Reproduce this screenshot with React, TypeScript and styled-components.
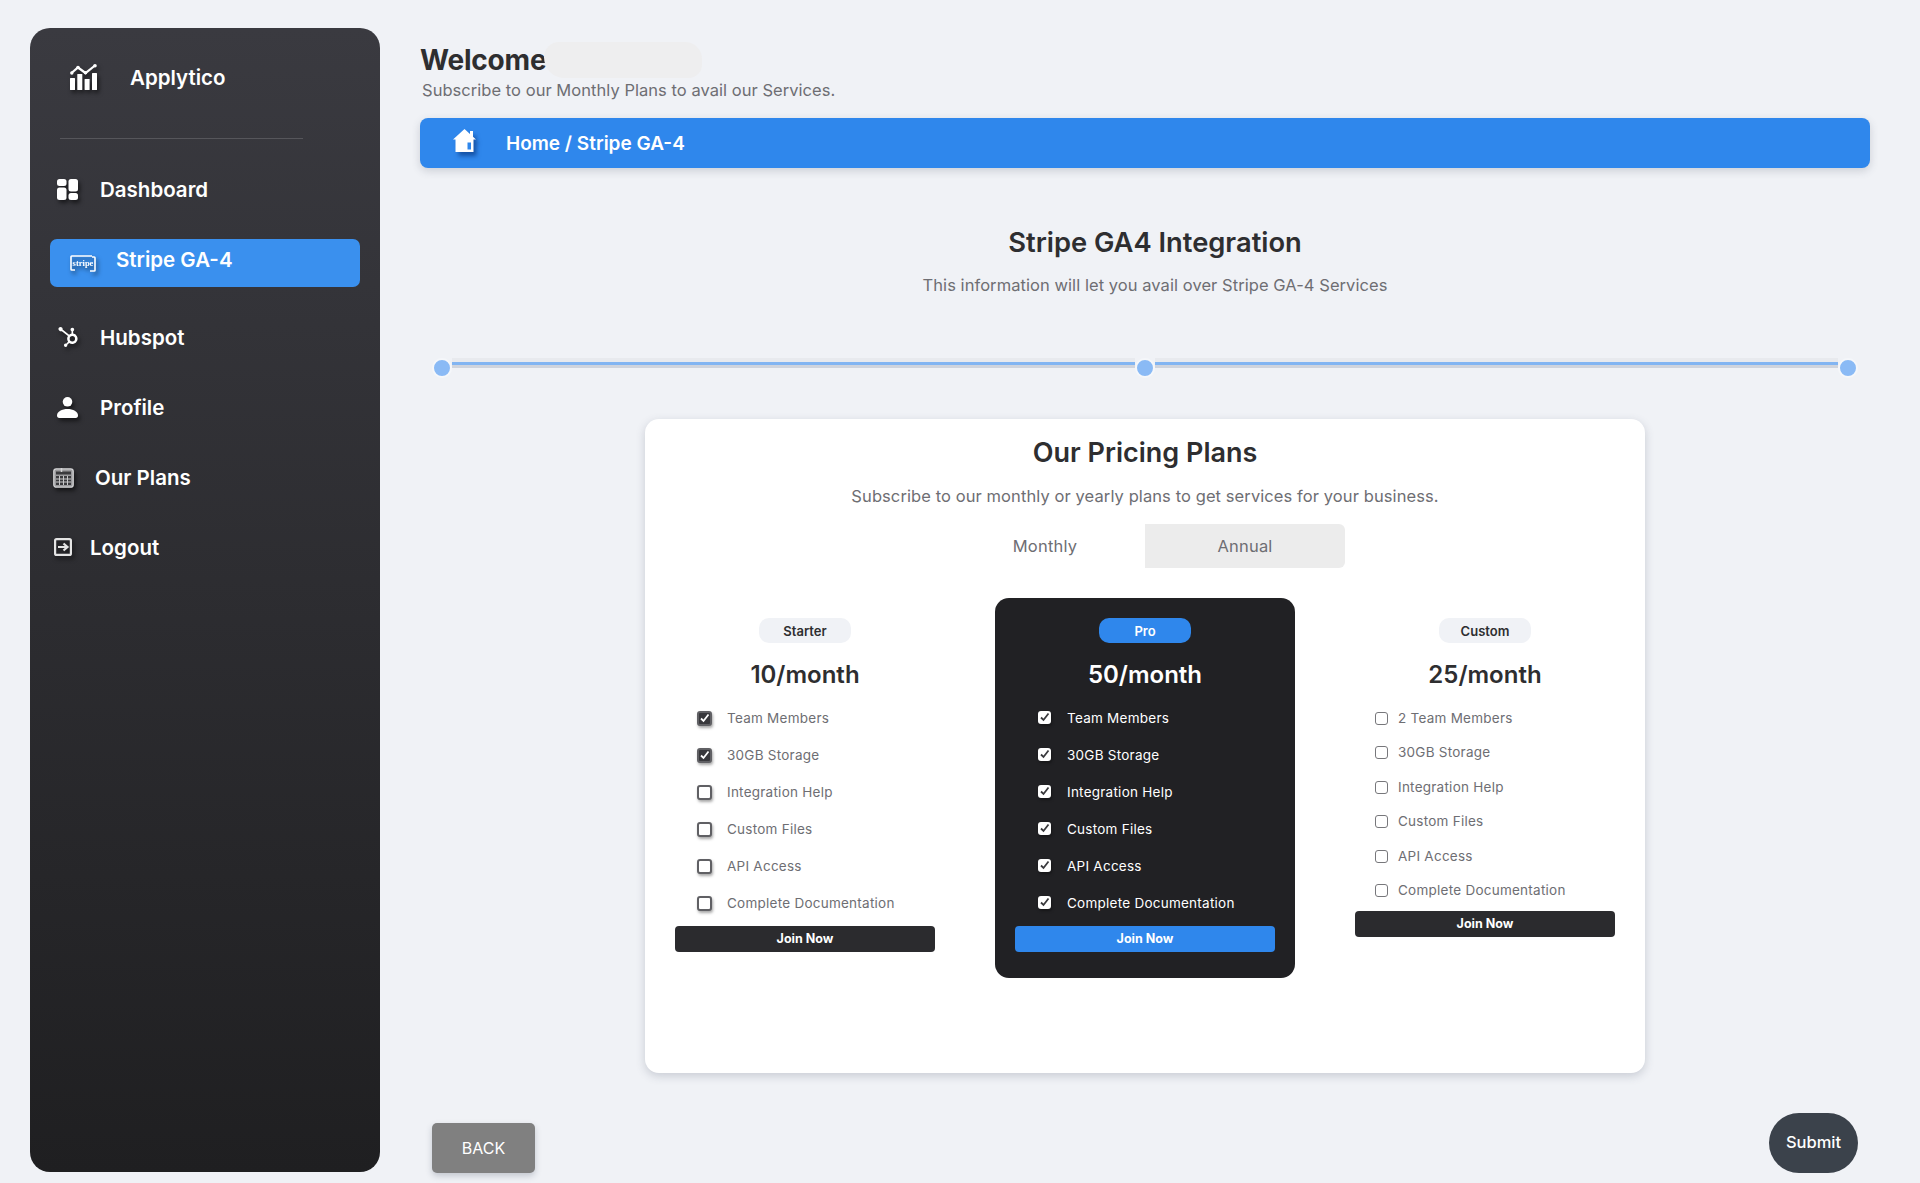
import styled, { createGlobalStyle } from 'styled-components';
import { SiHubspot } from 'react-icons/si';

const GlobalStyle = createGlobalStyle`
  html, body {
    margin: 0;
    padding: 0;
    background: #f0f2f6;
    font-family: 'Inter', 'Liberation Sans', sans-serif;
  }
  * {
    box-sizing: border-box;
  }
`;

type PlanTone = 'light' | 'dark';

type Plan = {
  name: string;
  price: string;
  tone: PlanTone;
  rowHeight: number;
  thin?: boolean;
  rowInset: number;
  rowGap: number;
  features: { label: string; checked: boolean }[];
};

const featureNames = ['Team Members', '30GB Storage', 'Integration Help', 'Custom Files', 'API Access', 'Complete Documentation'];

const plans: Plan[] = [
  {
    name: 'Starter',
    price: '10/month',
    tone: 'light',
    rowHeight: 37,
    rowInset: 22,
    rowGap: 15,
    features: featureNames.map((label, i) => ({ label, checked: i < 2 })),
  },
  {
    name: 'Pro',
    price: '50/month',
    tone: 'dark',
    rowHeight: 37,
    rowInset: 23,
    rowGap: 16,
    features: featureNames.map((label) => ({ label, checked: true })),
  },
  {
    name: 'Custom',
    price: '25/month',
    tone: 'light',
    rowHeight: 34.5,
    thin: true,
    rowInset: 20,
    rowGap: 10,
    features: featureNames.map((label, i) => ({ label: i === 0 ? `2 ${label}` : label, checked: false })),
  },
];

const BrandIcon = () => (
  <svg width="27" height="26" viewBox="0 0 27 26" fill="#fff">
    <rect x="0" y="14" width="5" height="12" rx="0.5" />
    <rect x="7.3" y="10" width="5" height="16" rx="0.5" />
    <rect x="14.6" y="15" width="5" height="11" rx="0.5" />
    <rect x="22" y="9" width="5" height="17" rx="0.5" />
    <polyline points="1.5,9 8,3.500 15.500,9 25,1.500" fill="none" stroke="#fff" strokeWidth="2.200" />
    <circle cx="1.800" cy="9" r="1.700" />
    <circle cx="8" cy="3.500" r="1.800" />
    <circle cx="15.500" cy="8.800" r="1.700" />
    <circle cx="25" cy="1.800" r="1.800" />
  </svg>
);

const DashboardIcon = () => (
  <svg width="21" height="21" viewBox="0 0 21 21" fill="#fff">
    <rect x="0" y="0" width="9.500" height="7" rx="2.500" />
    <rect x="0" y="8.500" width="9.500" height="12.500" rx="2.500" />
    <rect x="11.500" y="0" width="9.500" height="12.500" rx="2.500" />
    <rect x="11.500" y="14" width="9.500" height="7" rx="2.500" />
  </svg>
);

const StripeIcon = () => (
  <svg width="26" height="17" viewBox="0 0 26 17" fill="none">
    <path d="M4 1H1.800a.8.8 0 0 0-.8.8v12.400c0 .5.3.8.8.8H5M20 16h4.200c.5 0 .8-.3.8-.8V2.800c0-.5-.3-.8-.8-.8H22M4 1h18" stroke="#fff" strokeWidth="1.600" />
    <text x="13" y="11" textAnchor="middle" fontSize="8.500" fontWeight="700" fill="#fff" fontFamily="Liberation Serif, serif">stripe</text>
  </svg>
);

const ProfileIcon = () => (
  <svg width="21" height="21" viewBox="0 0 21 21" fill="#fff">
    <circle cx="10.500" cy="4.800" r="4.800" />
    <path d="M0 18.500C0 14.500 5 12 10.500 12S21 14.500 21 18.500c0 1.500-.8 2.500-2.300 2.500H2.300C.8 21 0 20 0 18.500z" />
  </svg>
);

const PlansIcon = () => (
  <svg width="21" height="21" viewBox="0 0 21 21" fill="none">
    <rect x="0.800" y="1.800" width="19.400" height="18.400" rx="2.500" fill="#9a9a9d" stroke="#d4d4d6" strokeWidth="1.300" />
    <rect x="3" y="4.500" width="15" height="3" fill="#3a3a3d" />
    <rect x="3" y="9" width="15" height="9" fill="#3a3a3d" />
    <path d="M6.500 9v9M10.500 9v9M14.500 9v9M3 12h15M3 15h15" stroke="#c8c8ca" strokeWidth="1" />
    <path d="M8.500 1v4" stroke="#d4d4d6" strokeWidth="1.500" />
  </svg>
);

const LogoutIcon = () => (
  <svg width="18" height="18" viewBox="0 0 18 18" fill="none">
    <rect x="1.100" y="1.100" width="15.800" height="15.800" rx="1.500" stroke="#e4e4e4" strokeWidth="2.200" />
    <path d="M4 9h9.500M9.500 5.500 13.500 9l-4 3.500" stroke="#e4e4e4" strokeWidth="2.200" />
  </svg>
);

const HomeIcon = () => (
  <svg width="23" height="28" viewBox="0 0 23 28">
    <path d="M11.500 3 0 13.500h2.500V26h18V13.500H23l-3-2.800V5h-3v3z" fill="#fff" />
    <rect x="14.500" y="16.500" width="3.500" height="7" fill="#2f87ec" />
  </svg>
);

const CheckMark = ({ color }: { color: string }) => (
  <svg width="11" height="11" viewBox="0 0 11 11" fill="none">
    <polyline points="2,5.500 4.500,8 9.500,1.500" stroke={color} strokeWidth="1.800" />
  </svg>
);

const App = () => {
  return (
    <Page>
      <GlobalStyle />
      <Sidebar>
        <Brand>
          <IconSlot>
            <BrandIcon />
          </IconSlot>
          <BrandName>Applytico</BrandName>
        </Brand>
        <SideDivider />
        <NavList>
          <NavItem $pad={7} $gap={22}>
            <IconSlot>
              <DashboardIcon />
            </IconSlot>
            Dashboard
          </NavItem>
          <ActiveNavItem>
            <IconSlot>
              <StripeIcon />
            </IconSlot>
            <ActiveLabel>Stripe GA-4</ActiveLabel>
          </ActiveNavItem>
          <NavItem $pad={8} $gap={22}>
            <IconSlot>
              <SiHubspot size={20} color="#fff" />
            </IconSlot>
            Hubspot
          </NavItem>
          <NavItem $pad={7} $gap={22}>
            <IconSlot>
              <ProfileIcon />
            </IconSlot>
            Profile
          </NavItem>
          <NavItem $pad={3} $gap={21}>
            <IconSlot>
              <PlansIcon />
            </IconSlot>
            Our Plans
          </NavItem>
          <NavItem $pad={4} $gap={18}>
            <IconSlot>
              <LogoutIcon />
            </IconSlot>
            Logout
          </NavItem>
        </NavList>
      </Sidebar>

      <Main>
        <Welcome>
          Welcome
          <Smudge />
        </Welcome>
        <Lead>Subscribe to our Monthly Plans to avail our Services.</Lead>
        <Breadcrumb>
          <HomeSlot>
            <HomeIcon />
          </HomeSlot>
          Home / Stripe GA-4
        </Breadcrumb>

        <PageTitle>Stripe GA4 Integration</PageTitle>
        <PageNote>This information will let you avail over Stripe GA-4 Services</PageNote>

        <Stepper>
          <StepDot />
          <StepLine />
          <StepDot />
          <StepLine />
          <StepDot />
        </Stepper>

        <PricingCard>
          <PricingTitle>Our Pricing Plans</PricingTitle>
          <PricingNote>Subscribe to our monthly or yearly plans to get services for your business.</PricingNote>
          <BillingToggle>
            <BillingOption>Monthly</BillingOption>
            <BillingOption $selected>Annual</BillingOption>
          </BillingToggle>

          <PlanGrid>
            {plans.map((plan) => (
              <PlanColumn key={plan.name} $tone={plan.tone}>
                <PlanPill $tone={plan.tone}>{plan.name}</PlanPill>
                <PlanPrice $tone={plan.tone}>{plan.price}</PlanPrice>
                <FeatureList $thin={plan.thin}>
                  {plan.features.map((feature) => (
                    <FeatureRow key={feature.label} $height={plan.rowHeight} $inset={plan.rowInset} $gap={plan.rowGap}>
                      <CheckBox $tone={plan.tone} $checked={feature.checked} $thin={plan.thin}>
                        {feature.checked && <CheckMark color={plan.tone === 'dark' ? '#3a3a3d' : '#fff'} />}
                      </CheckBox>
                      <FeatureLabel $tone={plan.tone}>{feature.label}</FeatureLabel>
                    </FeatureRow>
                  ))}
                </FeatureList>
                <JoinButton $tone={plan.tone} $thin={plan.thin}>Join Now</JoinButton>
              </PlanColumn>
            ))}
          </PlanGrid>
        </PricingCard>

        <Footer>
          <BackButton>BACK</BackButton>
          <SubmitButton>Submit</SubmitButton>
        </Footer>
      </Main>
    </Page>
  );
};

const Page = styled.div`
  width: 1920px;
  height: 1183px;
  overflow: hidden;
  padding: 28px 50px 0 30px;
  display: grid;
  grid-template-columns: 350px 1450px;
  column-gap: 40px;
  align-items: start;
  background: #f0f2f6;
`;

const Sidebar = styled.aside`
  height: 1144px;
  border-radius: 20px;
  padding-top: 24px;
  background: linear-gradient(180deg, #3a3a40 0%, #1f1f21 100%);
  color: #fff;
`;

const IconSlot = styled.span`
  display: inline-flex;
  flex: none;
  filter: drop-shadow(2px 3px 2px rgba(0, 0, 0, 0.55));
`;

const Brand = styled.div`
  height: 50px;
  padding-left: 40px;
  display: flex;
  align-items: center;
  gap: 33px;
`;

const BrandName = styled.span`
  margin-top: 1px;
  font-size: 20.500px;
  font-weight: 600;
`;

const SideDivider = styled.div`
  width: 243px;
  height: 1px;
  margin: 36px 0 0 30px;
  background: #56565b;
`;

const NavList = styled.nav`
  margin: 27px 20px 0;
  display: flex;
  flex-direction: column;
  gap: 24px;
`;

const NavItem = styled.a<{ $pad: number; $gap: number }>`
  height: 46px;
  padding-left: ${(p) => p.$pad}px;
  display: flex;
  align-items: center;
  gap: ${(p) => p.$gap}px;
  font-size: 20.500px;
  font-weight: 600;
  color: #fff;
`;

const ActiveNavItem = styled.a`
  height: 48px;
  margin: 3px 0;
  padding-left: 20px;
  display: flex;
  align-items: center;
  gap: 20px;
  border-radius: 7px;
  background: #3a90ee;
  font-size: 20.500px;
  font-weight: 600;
  color: #fff;
`;

const ActiveLabel = styled.span`
  margin-bottom: 8px;
`;

const Main = styled.main`
  padding-top: 15px;
  display: flex;
  flex-direction: column;
`;

const Welcome = styled.h1`
  position: relative;
  margin: 0;
  font-size: 28px;
  line-height: 34px;
  font-weight: 700;
  letter-spacing: -0.2px;
  color: #2e2e30;
`;

const Smudge = styled.span`
  position: absolute;
  left: 124px;
  top: -1px;
  width: 158px;
  height: 36px;
  border-radius: 16px 18px 14px 22px;
  background: #eeeeef;
`;

const Lead = styled.p`
  margin: 2px 0 0 2px;
  font-size: 16.500px;
  line-height: 22px;
  letter-spacing: 0.04px;
  color: #6e6e73;
`;

const Breadcrumb = styled.div`
  height: 50px;
  margin-top: 17px;
  padding-left: 33px;
  display: flex;
  align-items: center;
  gap: 30px;
  border-radius: 8px;
  background: #2f87ec;
  box-shadow: 0 3px 8px rgba(60, 70, 90, 0.2);
  color: #fff;
  font-size: 19px;
  font-weight: 600;
`;

const HomeSlot = styled.span`
  display: inline-flex;
  margin-top: -6px;
  filter: drop-shadow(3px 4px 2px rgba(0, 40, 110, 0.55));
`;

const PageTitle = styled.h2`
  margin: 57px 0 0;
  padding-left: 20px;
  text-align: center;
  font-size: 27.300px;
  line-height: 36px;
  font-weight: 600;
  color: #2e2e30;
`;

const PageNote = styled.p`
  margin: 12px 0 0;
  padding-left: 20px;
  text-align: center;
  font-size: 16.500px;
  line-height: 24px;
  letter-spacing: 0.06px;
  color: #6e6e73;
`;

const Stepper = styled.div`
  margin: 61px 12px 0 12px;
  display: flex;
  align-items: flex-start;
`;

const StepDot = styled.span`
  flex: none;
  width: 20px;
  height: 20px;
  border-radius: 50%;
  border: 2px solid #f5f7fa;
  background: #8abaf5;
`;

const StepLine = styled.span`
  flex: 1;
  height: 10px;
  background: linear-gradient(180deg, #e8eaee 0 4px, #82b5f2 4px 7px, #cfd4dd 7px 10px);
`;

const PricingCard = styled.section`
  width: 1000px;
  height: 654px;
  margin: 41px 0 0 225px;
  padding: 16px 30px 0;
  border-radius: 14px;
  background: #fff;
  box-shadow: 0 3px 10px rgba(60, 70, 90, 0.22);
`;

const PricingTitle = styled.h2`
  margin: 0;
  text-align: center;
  font-size: 27px;
  line-height: 36px;
  font-weight: 600;
  color: #2e2e30;
`;

const PricingNote = styled.p`
  margin: 13px 0 0;
  text-align: center;
  font-size: 16.500px;
  line-height: 24px;
  letter-spacing: 0.09px;
  color: #6e6e73;
`;

const BillingToggle = styled.div`
  width: 400px;
  height: 44px;
  margin: 16px auto 0;
  display: grid;
  grid-template-columns: 1fr 1fr;
`;

const BillingOption = styled.div<{ $selected?: boolean }>`
  padding-bottom: 1px;
  display: flex;
  align-items: center;
  justify-content: center;
  border-radius: ${(p) => (p.$selected ? '0 6px 6px 0' : '0')};
  background: ${(p) => (p.$selected ? '#ececec' : 'transparent')};
  font-size: 16.500px;
  letter-spacing: 0.2px;
  color: #6e6e73;
`;

const PlanGrid = styled.div`
  margin-top: 30px;
  display: grid;
  grid-template-columns: 260px 300px 260px;
  column-gap: 60px;
  align-items: start;
`;

const PlanColumn = styled.div<{ $tone: PlanTone }>`
  padding: 20px ${(p) => (p.$tone === 'dark' ? '20px' : '0')} 0;
  height: ${(p) => (p.$tone === 'dark' ? '380px' : 'auto')};
  display: flex;
  flex-direction: column;
  border-radius: 14px;
  background: ${(p) => (p.$tone === 'dark' ? '#212124' : 'transparent')};
`;

const PlanPill = styled.span<{ $tone: PlanTone }>`
  width: 92px;
  height: 25px;
  align-self: center;
  display: flex;
  align-items: center;
  justify-content: center;
  border-radius: 10px;
  background: ${(p) => (p.$tone === 'dark' ? '#2f87ec' : '#f0f2f6')};
  color: ${(p) => (p.$tone === 'dark' ? '#fff' : '#2e2e30')};
  font-size: 13px;
  font-weight: 600;
`;

const PlanPrice = styled.div<{ $tone: PlanTone }>`
  margin-top: 15px;
  text-align: center;
  font-size: 24px;
  line-height: 34px;
  font-weight: 600;
  color: ${(p) => (p.$tone === 'dark' ? '#fff' : '#2e2e30')};
`;

const FeatureList = styled.ul<{ $thin?: boolean }>`
  list-style: none;
  margin: ${(p) => (p.$thin ? '9px' : '8px')} 0 0;
  padding: 0;
`;

const FeatureRow = styled.li<{ $height: number; $inset: number; $gap: number }>`
  height: ${(p) => p.$height}px;
  padding-left: ${(p) => p.$inset}px;
  display: flex;
  align-items: center;
  gap: ${(p) => p.$gap}px;
`;

const CheckBox = styled.span<{ $tone: PlanTone; $checked: boolean; $thin?: boolean }>`
  flex: none;
  width: ${(p) => (p.$tone === 'dark' || p.$thin ? '13px' : '15px')};
  height: ${(p) => (p.$tone === 'dark' || p.$thin ? '13px' : '15px')};
  margin-top: ${(p) => (p.$tone === 'dark' ? '-2px' : '0')};
  display: flex;
  align-items: center;
  justify-content: center;
  border-radius: 3px;
  border: ${(p) => (p.$thin ? '1.500px solid #77777b' : p.$tone === 'dark' ? 'none' : '2px solid #606064')};
  background: ${(p) => (p.$tone === 'dark' ? '#fff' : p.$checked ? '#38383c' : '#fff')};
  box-shadow: ${(p) => (p.$thin ? 'none' : '1px 2px 3px rgba(0, 0, 0, 0.35)')};
`;

const FeatureLabel = styled.span<{ $tone: PlanTone }>`
  margin-top: -1px;
  font-size: 13.500px;
  letter-spacing: 0.25px;
  color: ${(p) => (p.$tone === 'dark' ? '#fff' : '#6e6e73')};
`;

const JoinButton = styled.button<{ $tone: PlanTone; $thin?: boolean }>`
  height: 26px;
  margin-top: ${(p) => (p.$thin ? '3px' : '4px')};
  border: none;
  border-radius: 4px;
  padding: 0 0 2px;
  background: ${(p) => (p.$tone === 'dark' ? '#2f87ec' : '#2b2b2e')};
  color: #fff;
  font-family: inherit;
  font-size: 12.500px;
  font-weight: 700;
`;

const Footer = styled.div`
  height: 60px;
  margin: 40px 12px 0;
  display: flex;
  align-items: flex-end;
  justify-content: space-between;
`;

const BackButton = styled.button`
  width: 103px;
  height: 50px;
  border: none;
  border-radius: 5px;
  padding: 0 0 1px;
  background: #808080;
  box-shadow: 0 3px 6px rgba(60, 70, 90, 0.25);
  color: #fff;
  font-family: inherit;
  font-size: 16px;
`;

const SubmitButton = styled.button`
  width: 89px;
  height: 60px;
  border: none;
  border-radius: 30px;
  padding: 0 0 2px;
  background: #3b424b;
  color: #fff;
  font-family: inherit;
  font-size: 16.500px;
  font-weight: 500;
`;

export default App;
